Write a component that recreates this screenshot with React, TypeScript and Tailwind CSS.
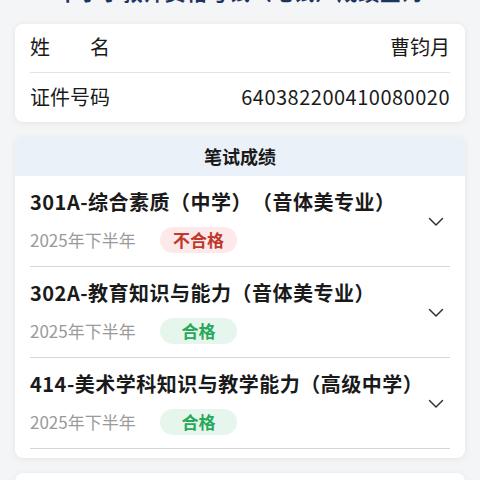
import React from 'react';

type Score = {
  id: string;
  subject: string;
  term: string;
  passed: boolean;
};

const scores: Score[] = [
  { id: '301A', subject: '301A-综合素质（中学）（音体美专业）', term: '2025年下半年', passed: false },
  { id: '302A', subject: '302A-教育知识与能力（音体美专业）', term: '2025年下半年', passed: true },
  { id: '414', subject: '414-美术学科知识与教学能力（高级中学）', term: '2025年下半年', passed: true },
];

function Chevron() {
  return (
    <svg width="16" height="10" viewBox="0 0 16 10" fill="none">
      <path d="M1.5 1.5l6.5 6.5 6.5-6.5" stroke="#333" strokeWidth="1.5" strokeLinecap="round" strokeLinejoin="round" />
    </svg>
  );
}

export default function App() {
  return (
    <div
      className="w-[480px] h-[480px] overflow-hidden bg-[#f4f5f7] text-[#1a1a1a] [text-spacing-trim:space-all]"
      style={{ fontFamily: '"Noto Sans CJK SC", "Noto Sans", sans-serif' }}
    >
      {/* Page title, scrolled mostly out of view */}
      <div className="h-[28px] -mt-[23px] text-center text-[21px] leading-[28px] font-bold text-[#1d3461] tracking-[0.5px]">
        中小学教师资格考试（笔试）成绩查询
      </div>

      <div className="px-[15px] pt-[19px] flex flex-col gap-[15px]">
        {/* Candidate info */}
        <div className="bg-white rounded-[8px] shadow-[0_1px_6px_rgba(0,0,0,0.08)] px-[15px]">
          <div className="h-[49px] pb-[3px] flex items-center justify-between border-b border-[#e3e3e3] text-[20px]">
            <span className="flex w-[80px] justify-between">
              <span>姓</span>
              <span>名</span>
            </span>
            <span>曹钧月</span>
          </div>
          <div className="h-[49px] pb-[1px] flex items-center justify-between text-[20px]">
            <span>证件号码</span>
            <span className="tracking-[0.5px]">640382200410080020</span>
          </div>
        </div>

        {/* Written exam scores */}
        <div className="bg-white rounded-[8px] shadow-[0_1px_6px_rgba(0,0,0,0.08)] overflow-hidden">
          <div className="h-[39px] bg-[#eaf1f9] flex items-center justify-center text-[18px] font-bold">
            笔试成绩
          </div>
          <div className="px-[15px]">
            {scores.map((s) => (
              <div key={s.id} className="pt-[13px] pb-[13px] border-b border-[#d6d6d6] flex items-center justify-between">
                <div className="flex flex-col gap-[12px]">
                  <div className="h-[26px] leading-[26px] text-[20px] font-bold tracking-[0.5px] whitespace-nowrap">{s.subject}</div>
                  <div className="h-[26px] flex items-center">
                    <span className="text-[17px] text-[#9a9a9a] w-[130px]">{s.term}</span>
                    {s.passed ? (
                      <span className="h-[26px] w-[77px] rounded-full bg-[#e6f6ec] text-[#27a85a] text-[17px] font-bold flex items-center justify-center">
                        合格
                      </span>
                    ) : (
                      <span className="h-[26px] w-[77px] rounded-full bg-[#fde8ea] text-[#c0392b] text-[17px] font-bold flex items-center justify-center">
                        不合格
                      </span>
                    )}
                  </div>
                </div>
                <div className="pr-[6px] pt-[2px]">
                  <Chevron />
                </div>
              </div>
            ))}
            <div className="h-[9px]" />
          </div>
        </div>

        <div className="bg-white rounded-[8px] shadow-[0_1px_6px_rgba(0,0,0,0.08)] h-[60px]" />
      </div>
    </div>
  );
}
